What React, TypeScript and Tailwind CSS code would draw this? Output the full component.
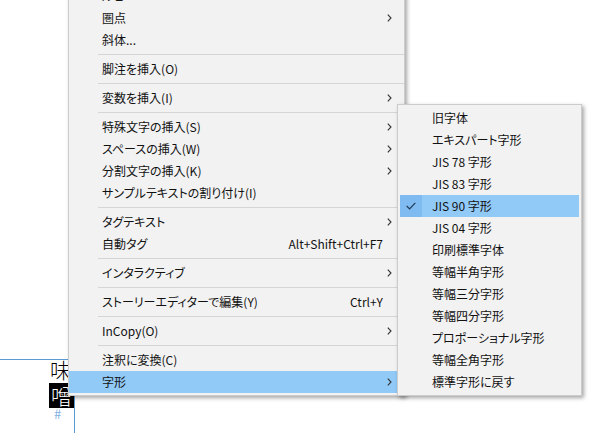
import React from "react";

type Item =
  | { sep: true }
  | { sep?: false; label: string; arrow?: boolean; shortcut?: string; active?: boolean };

const mainItems: Item[] = [
  { label: "ルビ", arrow: true },
  { label: "圏点", arrow: true },
  { label: "斜体..." },
  { sep: true },
  { label: "脚注を挿入(O)" },
  { sep: true },
  { label: "変数を挿入(I)", arrow: true },
  { sep: true },
  { label: "特殊文字の挿入(S)", arrow: true },
  { label: "スペースの挿入(W)", arrow: true },
  { label: "分割文字の挿入(K)", arrow: true },
  { label: "サンプルテキストの割り付け(I)" },
  { sep: true },
  { label: "タグテキスト", arrow: true },
  { label: "自動タグ", shortcut: "Alt+Shift+Ctrl+F7" },
  { sep: true },
  { label: "インタラクティブ", arrow: true },
  { sep: true },
  { label: "ストーリーエディターで編集(Y)", shortcut: "Ctrl+Y" },
  { sep: true },
  { label: "InCopy(O)", arrow: true },
  { sep: true },
  { label: "注釈に変換(C)" },
  { label: "字形", arrow: true, active: true },
];

const glyphItems = [
  "旧字体",
  "エキスパート字形",
  "JIS 78 字形",
  "JIS 83 字形",
  "JIS 90 字形",
  "JIS 04 字形",
  "印刷標準字体",
  "等幅半角字形",
  "等幅三分字形",
  "等幅四分字形",
  "プロポーショナル字形",
  "等幅全角字形",
  "標準字形に戻す",
];

function Chevron() {
  return (
    <svg width="5" height="8" viewBox="0 0 5 8" fill="none">
      <path d="M0.8 0.6 L4 4 L0.8 7.4" stroke="#333" strokeWidth="1.1" />
    </svg>
  );
}

function Check() {
  return (
    <svg width="10" height="8" viewBox="0 0 10 8" fill="none">
      <path d="M0.7 4 L3.6 6.9 L9.3 0.8" stroke="#223a55" strokeWidth="1.2" />
    </svg>
  );
}

export default function App() {
  return (
    <div className="relative w-[596px] h-[433px] overflow-hidden bg-white font-['Noto_Sans_CJK_JP','Noto_Sans',sans-serif] [font-feature-settings:'palt'] text-[12px] text-[#111]">
      {/* document canvas behind the menu */}
      <div className="absolute left-0 top-[359px] w-[75px] h-px bg-[#5b9bd5]" />
      <div className="absolute left-[74px] top-[359px] bottom-0 w-px bg-[#5b9bd5]" />
      <div className="absolute left-[50px] top-[357px] text-[21px] leading-[25px] font-light text-black">味</div>
      <div className="absolute left-[49px] top-[383px] w-[25px] h-[25px] bg-black text-white text-[21px] leading-[25px] text-center font-light">噌</div>
      <div className="absolute left-[54px] top-[408px] text-[13px] leading-[12px] text-[#7fb0e6]">#</div>

      {/* context menu */}
      <div className="absolute left-[68px] top-[-17px] w-[337px] bg-[#f2f2f2] border border-[#cccccc] pt-px pb-[2px] shadow-[2px_2px_4px_rgba(0,0,0,0.35)]">
        {mainItems.map((it, i) =>
          it.sep ? (
            <div key={i} className="h-[7px] flex items-center pl-[29px]">
              <div className="h-px w-full bg-[#d5d5d5]" />
            </div>
          ) : (
            <div
              key={i}
              className={`h-[22px] flex items-center pl-[33px] ${it.active ? "bg-[#91c9f7]" : ""}`}
            >
              <span className="flex-1 whitespace-nowrap">{it.label}</span>
              {it.shortcut && <span className="whitespace-nowrap">{it.shortcut}</span>}
              <span className="w-[21px] flex pl-[4px]">{it.arrow && <Chevron />}</span>
            </div>
          )
        )}
      </div>

      {/* glyph submenu */}
      <div className="absolute left-[397px] top-[104px] w-[185px] bg-[#f2f2f2] border border-[#cccccc] p-[2px] shadow-[2px_2px_4px_rgba(0,0,0,0.35)]">
        {glyphItems.map((label) => {
          const active = label === "JIS 90 字形";
          return (
            <div key={label} className={`h-[22px] flex items-center ${active ? "bg-[#91c9f7]" : ""}`}>
              <span className={`w-[22px] h-[22px] flex items-center justify-center ${active ? "bg-[#7fbaf0]" : ""}`}>
                {active && <Check />}
              </span>
              <span className="pl-[10px] whitespace-nowrap">{label}</span>
            </div>
          );
        })}
      </div>
    </div>
  );
}
